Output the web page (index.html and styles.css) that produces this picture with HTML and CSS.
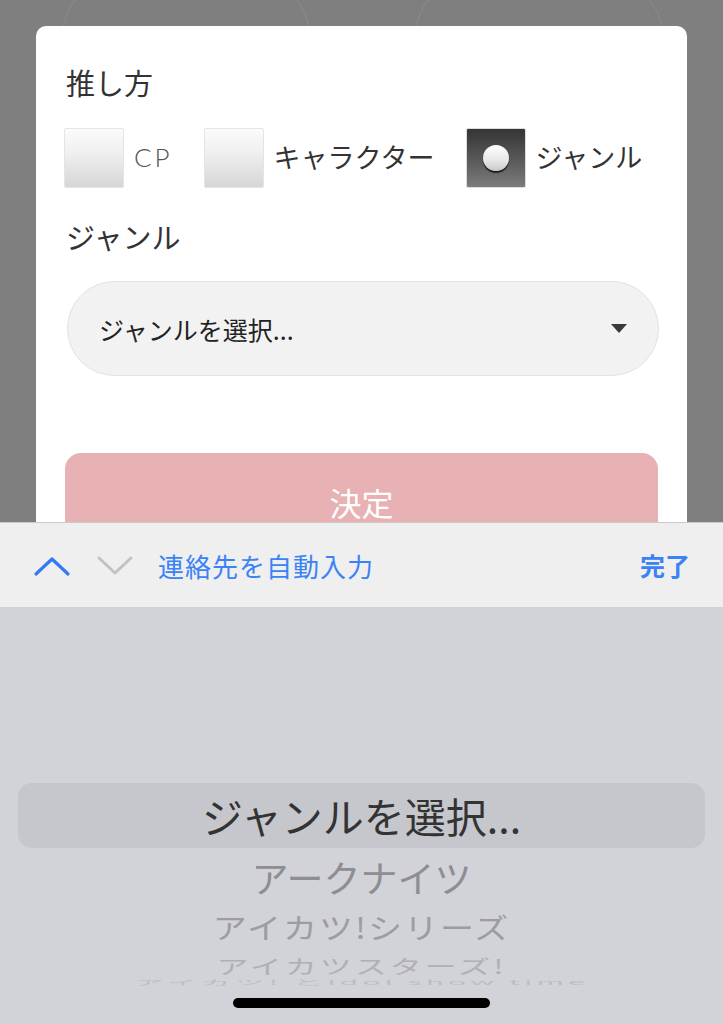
FILE: index.html
```html
<!DOCTYPE html>
<html lang="ja">
<head>
<meta charset="utf-8">
<title>推し方</title>
<link rel="stylesheet" href="styles.css">
</head>
<body>
<div class="screen">

  <div class="backdrop">
    <div class="ghosts">
      <div class="ghost"></div>
      <div class="ghost"></div>
    </div>

    <div class="card">
      <div class="label">推し方</div>

      <div class="choices">
        <div class="choice">
          <span class="box"></span>
          <span class="choice-text cp">CP</span>
        </div>
        <div class="choice">
          <span class="box"></span>
          <span class="choice-text">キャラクター</span>
        </div>
        <div class="choice">
          <span class="box checked"><span class="dot"></span></span>
          <span class="choice-text">ジャンル</span>
        </div>
      </div>

      <div class="label genre-label">ジャンル</div>

      <div class="select">
        <span>ジャンルを選択...</span>
        <span class="arrow"></span>
      </div>

      <div class="submit">決定</div>
    </div>
  </div>

  <div class="toolbar">
    <svg class="chev" width="38" height="22" viewBox="0 0 38 22">
      <polyline points="3,19 19,4 35,19" fill="none" stroke="#3478f6" stroke-width="3.2" stroke-linecap="round" stroke-linejoin="round"/>
    </svg>
    <svg class="chev" width="38" height="22" viewBox="0 0 38 22">
      <polyline points="3,3 19,18 35,3" fill="none" stroke="#c2c2c6" stroke-width="3" stroke-linecap="round" stroke-linejoin="round"/>
    </svg>
    <span class="autofill">連絡先を自動入力</span>
    <span class="done">完了</span>
  </div>

  <div class="picker">
    <div class="picked">ジャンルを選択...</div>
    <div class="opt opt1">アークナイツ</div>
    <div class="opt opt2">アイカツ!シリーズ</div>
    <div class="opt opt3">アイカツスターズ!</div>
    <div class="opt opt4">アイカツ! とIdol show time</div>
    <div class="home-bar"></div>
  </div>

</div>
</body>
</html>
```

FILE: styles.css
```css
body
{
  margin:0;
  padding:0;
  background-color:#7f7f7f;
  font-family:"Noto Sans CJK JP", "Noto Sans", sans-serif;
}

.screen
{
  width:723px;
  height:1024px;
  overflow:hidden;
  display:flex;
  flex-direction:column;
}

/* dimmed page + modal */

.backdrop
{
  position:relative;
  height:522px;
  overflow:hidden;
  background-color:#7f7f7f;
}

.ghosts
{
  position:absolute;
  top:-20px;
  left:62px;
  display:flex;
  gap:105px;
}

.ghost
{
  width:248px;
  height:110px;
  box-sizing:border-box;
  border:1px solid #8b8b8b;
  border-radius:60px;
}

.card
{
  position:relative;
  margin:26px 36px 0;
  height:560px;
  background-color:#fff;
  border-radius:10px;
  padding:36px 28px 0;
  box-sizing:border-box;
}

.label
{
  font-size:29px;
  line-height:40px;
  color:#333;
  margin-left:2px;
}

.choices
{
  display:flex;
  align-items:center;
  gap:31px;
  margin-top:26px;
}

.choice
{
  display:flex;
  align-items:center;
  gap:10px;
}

.box
{
  width:60px;
  height:60px;
  box-sizing:border-box;
  border:1px solid #e4e4e4;
  border-radius:2px;
  background:linear-gradient(#fbfbfb, #f0f0f0 40%, #d6d6d6);
  display:flex;
  align-items:center;
  justify-content:center;
}

.box.checked
{
  border-color:#dcdcdc;
  background:linear-gradient(#353535, #5a5a5a 55%, #7c7c7c);
}

.dot
{
  width:26px;
  height:26px;
  border-radius:50%;
  background:linear-gradient(#ffffff, #e6e6e6 60%, #c9c9c9);
  box-shadow:0 2px 1px #1e1e1e;
}

.choice-text
{
  font-size:27px;
  color:#333;
  margin-top:-3px;
}

.cp
{
  font-family:Lato, "Noto Sans", sans-serif;
  font-weight:300;
  font-size:26px;
  letter-spacing:3px;
  color:#555;
}

.genre-label
{
  margin-top:28px;
}

.select
{
  margin:25px 0 0 3px;
  height:95px;
  box-sizing:border-box;
  border:1px solid #e2e2e2;
  border-radius:48px;
  background-color:#f2f2f2;
  padding:0 31px 0 31px;
  display:flex;
  align-items:center;
  justify-content:space-between;
  font-size:25px;
  color:#222;
}

.arrow
{
  width:0;
  height:0;
  border-left:8px solid transparent;
  border-right:8px solid transparent;
  border-top:9px solid #3a3a3a;
}

.submit
{
  margin:77px 1px 0 1px;
  height:100px;
  border-radius:16px;
  background-color:#e8b1b3;
  color:#fff;
  font-size:32px;
  text-align:center;
  line-height:98px;
}

/* keyboard accessory bar */

.toolbar
{
  height:85px;
  box-sizing:border-box;
  border-top:1px solid #c9c9cc;
  background-color:#efeff0;
  display:flex;
  align-items:center;
  padding:0 33px 0 33px;
  font-size:26px;
  color:#3b82f5;
}

.chev
{
  margin-right:25px;
  margin-top:2px;
}

.autofill
{
  flex:1;
  margin-left:-1px;
  letter-spacing:1px;
}

.done
{
  font-weight:bold;
  font-size:25px;
}

/* wheel picker */

.picker
{
  flex:1;
  background-color:#d2d3d8;
  padding:176px 18px 0;
  display:flex;
  flex-direction:column;
  align-items:center;
}

.picked
{
  align-self:stretch;
  height:65px;
  border-radius:14px;
  background-color:#c6c7cc;
  font-size:41px;
  line-height:65px;
  text-align:center;
  color:#333;
}

.opt
{
  text-align:center;
  white-space:nowrap;
}

.opt1
{
  margin-top:9px;
  font-size:37px;
  line-height:40px;
  color:#8e8e92;
}

.opt2
{
  margin-top:12px;
  font-size:34px;
  line-height:36px;
  letter-spacing:2px;
  color:#9d9da1;
  transform:scaleY(0.85);
}

.opt3
{
  margin-top:6px;
  font-size:32px;
  line-height:28px;
  letter-spacing:3px;
  color:#b0b0b4;
  transform:scaleY(0.62);
}

.opt4
{
  margin-top:-2px;
  font-size:30px;
  line-height:10px;
  letter-spacing:4px;
  color:#bdbdc1;
  transform:scaleY(0.22);
}

.home-bar
{
  margin-top:11px;
  width:257px;
  height:10px;
  border-radius:5px;
  background-color:#000;
}
```
